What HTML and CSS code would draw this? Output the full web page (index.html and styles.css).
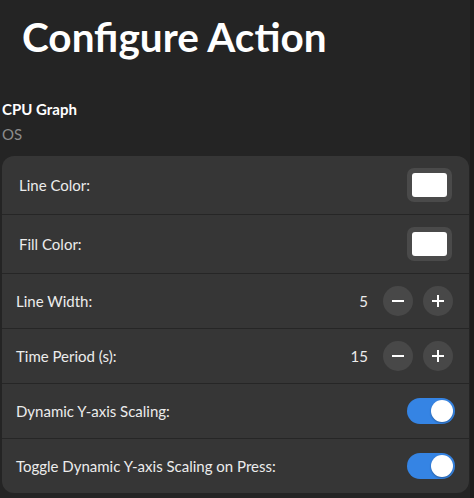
FILE: index.html
```html
<!DOCTYPE html>
<html>
<head>
<meta charset="utf-8">
<link rel="stylesheet" href="styles.css">
</head>
<body>
<div class="window">
  <h1 class="title">Configure Action</h1>
  <div class="info">
    <div class="name">CPU Graph</div>
    <div class="plugin">OS</div>
  </div>
  <div class="card">
    <div class="row row-color">
      <span class="label">Line Color:</span>
      <button class="color-btn"><span class="swatch"></span></button>
    </div>
    <div class="row row-color">
      <span class="label">Fill Color:</span>
      <button class="color-btn"><span class="swatch"></span></button>
    </div>
    <div class="row">
      <span class="label">Line Width:</span>
      <div class="spin">
        <span class="value">5</span>
        <button class="round"><svg width="12" height="12" viewBox="0 0 12 12"><rect x="0" y="5" width="12" height="2" fill="#fff"/></svg></button>
        <button class="round"><svg width="12" height="12" viewBox="0 0 12 12"><rect x="0" y="5" width="12" height="2" fill="#fff"/><rect x="5" y="0" width="2" height="12" fill="#fff"/></svg></button>
      </div>
    </div>
    <div class="row">
      <span class="label">Time Period (s):</span>
      <div class="spin">
        <span class="value">15</span>
        <button class="round"><svg width="12" height="12" viewBox="0 0 12 12"><rect x="0" y="5" width="12" height="2" fill="#fff"/></svg></button>
        <button class="round"><svg width="12" height="12" viewBox="0 0 12 12"><rect x="0" y="5" width="12" height="2" fill="#fff"/><rect x="5" y="0" width="2" height="12" fill="#fff"/></svg></button>
      </div>
    </div>
    <div class="row">
      <span class="label">Dynamic Y-axis Scaling:</span>
      <span class="switch on"><span class="knob"></span></span>
    </div>
    <div class="row">
      <span class="label">Toggle Dynamic Y-axis Scaling on Press:</span>
      <span class="switch on"><span class="knob"></span></span>
    </div>
  </div>
</div>
</body>
</html>
```
FILE: styles.css
```css
html, body {
  margin: 0;
  padding: 0;
  background: #242424;
}
body {
  width: 474px;
  height: 498px;
  overflow: hidden;
  font-family: Lato, "Noto Sans", sans-serif;
  color: #ffffff;
}
.window {
  display: flex;
  flex-direction: column;
  height: 498px;
  box-sizing: border-box;
  border-right: 4px solid #1c1c1c;
}
.title {
  margin: 0;
  padding: 13px 0 0 22px;
  font-size: 40.5px;
  line-height: 48px;
  font-weight: 700;
  color: #ffffff;
}
.info {
  padding: 37px 0 0 2px;
}
.name {
  font-size: 15px;
  font-weight: 700;
  line-height: 22px;
  color: #ffffff;
}
.plugin {
  margin-top: 2px;
  font-size: 15px;
  line-height: 24px;
  color: #8c8c8c;
}
.card {
  margin: 10px 1px 0 2px;
  background: #363636;
  border-radius: 12px;
  overflow: hidden;
}
.row {
  display: flex;
  align-items: center;
  justify-content: space-between;
  height: 54px;
  padding: 0 14px 0 14px;
  border-top: 1px solid #262626;
}
.row:first-child {
  border-top: none;
}
.row-color {
  height: 58px;
  padding: 0 17px 0 17px;
}
.label {
  font-size: 15px;
  color: #ececec;
}
.color-btn {
  width: 45px;
  height: 34px;
  border: none;
  padding: 0;
  border-radius: 7px;
  background: #4a4a4a;
  display: flex;
  align-items: center;
  justify-content: center;
}
.swatch {
  width: 35px;
  height: 24px;
  border-radius: 3px;
  background: #ffffff;
}
.spin {
  display: flex;
  align-items: center;
  gap: 10px;
  margin-right: 2px;
}
.value {
  font-size: 15px;
  color: #ececec;
  margin-right: 5px;
}
.round {
  width: 30px;
  height: 30px;
  border-radius: 50%;
  border: none;
  padding: 0;
  background: #484848;
  display: flex;
  align-items: center;
  justify-content: center;
}
.switch {
  width: 48px;
  height: 26px;
  border-radius: 13px;
  background: #3584e4;
  position: relative;
  display: block;
}
.knob {
  position: absolute;
  top: 2px;
  right: 2px;
  width: 22px;
  height: 22px;
  border-radius: 50%;
  background: #ffffff;
  box-shadow: 0 1px 2px rgba(0,0,0,0.3);
}
```
